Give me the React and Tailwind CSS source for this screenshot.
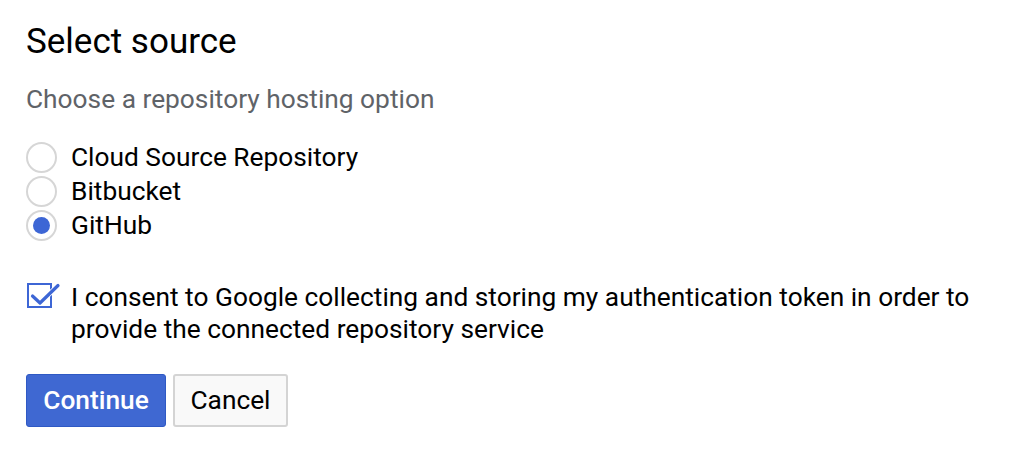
import { useState } from 'react';

const options = ['Cloud Source Repository', 'Bitbucket', 'GitHub'];

export default function App() {
  const [source, setSource] = useState('GitHub');
  const [consent, setConsent] = useState(true);

  return (
    <div className="min-h-[458px] bg-white pl-[26px] pt-[22px] font-['Roboto',sans-serif] text-[#202124]">
      <h1 className="text-[35px] leading-[40px] font-normal text-black">Select source</h1>

      <p className="mt-[21px] text-[26.3px] leading-[32px] text-[#5f6368]">Choose a repository hosting option</p>

      <div className="mt-[27px] flex flex-col gap-[3px]">
        {options.map((opt) => (
          <label key={opt} className="flex items-center gap-[14px] h-[31px] cursor-pointer" onClick={() => setSource(opt)}>
            <span className="w-[31px] h-[31px] rounded-full border-2 border-[#d6d6d6] bg-white flex items-center justify-center">
              {source === opt && <span className="w-[17px] h-[17px] rounded-full bg-[#3d66d5]" />}
            </span>
            <span className="text-[26.3px] leading-[31px] text-black">{opt}</span>
          </label>
        ))}
      </div>

      <div className="mt-[40px] flex items-start gap-[14px] cursor-pointer" onClick={() => setConsent(!consent)}>
        <span className="relative w-[31px] h-[32px] shrink-0">
          <span className="absolute left-[1px] top-[2px] w-[25px] h-[25px] border-2 border-[#3d66d5] bg-white" />
          {consent && (
            <svg className="absolute left-0 top-0" width="36" height="30" viewBox="0 0 36 30">
              <path d="M6.5 15 L14 22 L32 4.5" fill="none" stroke="white" strokeWidth="5" strokeLinecap="round" strokeLinejoin="round" />
              <path d="M6.5 15 L14 22 L32 4.5" fill="none" stroke="#3d66d5" strokeWidth="3.2" strokeLinecap="round" strokeLinejoin="round" />
            </svg>
          )}
        </span>
        <p className="text-[26.3px] leading-[32px] text-black max-w-[920px]">
          I consent to Google collecting and storing my authentication token in order to provide the connected repository service
        </p>
      </div>

      <div className="mt-[29px] flex gap-[7px]">
        <button className="w-[140px] h-[53px] rounded-[3px] bg-[#3f68d2] border border-[#2f59c4] text-white text-[26.3px] font-medium">
          Continue
        </button>
        <button className="w-[115px] h-[53px] rounded-[3px] bg-[#f9f9f9] border-2 border-[#d4d4d4] text-black text-[26.3px]">
          Cancel
        </button>
      </div>
    </div>
  );
}
